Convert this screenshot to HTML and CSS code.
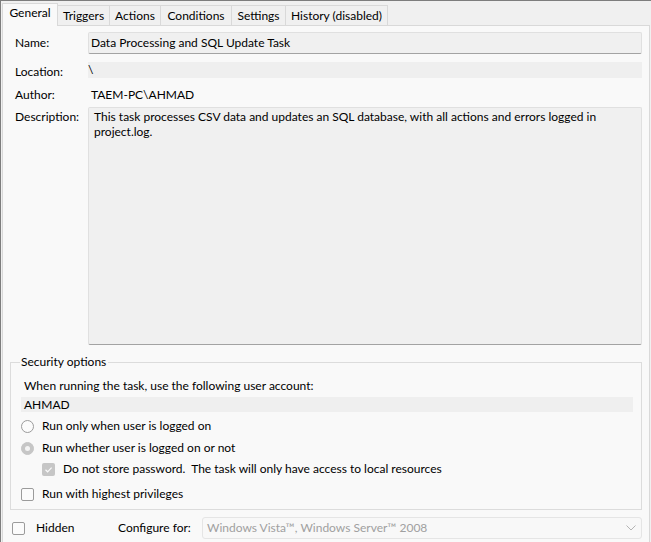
FILE: index.html
```html
<!DOCTYPE html>
<html>
<head>
<meta charset="utf-8">
<link rel="stylesheet" href="styles.css">
</head>
<body>
<div class="window">
  <div class="tabs">
    <div class="tab active w-general">General</div>
    <div class="tab w-triggers">Triggers</div>
    <div class="tab w-actions">Actions</div>
    <div class="tab w-conditions">Conditions</div>
    <div class="tab w-settings">Settings</div>
    <div class="tab w-history">History (disabled)</div>
  </div>
  <div class="panel">
    <div class="row row-name">
      <div class="label">Name:</div>
      <div class="field boxed name-field">Data Processing and SQL Update Task</div>
    </div>
    <div class="row row-location">
      <div class="label">Location:</div>
      <div class="field flat loc-field">\</div>
    </div>
    <div class="row row-author">
      <div class="label">Author:</div>
      <div class="field plain">TAEM-PC\AHMAD</div>
    </div>
    <div class="row row-desc">
      <div class="label desc-label">Description:</div>
      <div class="field boxed desc-field">This task processes CSV data and updates an SQL database, with all actions and errors logged in<br>project.log.</div>
    </div>
    <fieldset class="group">
      <legend>Security options</legend>
      <div class="account-label">When running the task, use the following user account:</div>
      <div class="account-field">AHMAD</div>
      <div class="opt opt-radio1"><span class="radio"></span><span>Run only when user is logged on</span></div>
      <div class="opt opt-radio2"><span class="radio checked-disabled"></span><span>Run whether user is logged on or not</span></div>
      <div class="opt opt-sub"><span class="check checked-disabled"><svg viewBox="0 0 13 13" width="13" height="13"><path d="M3.5 6.8 L5.6 8.8 L9.6 4.6" fill="none" stroke="#fafafa" stroke-width="1.2"/></svg></span><span>Do not store password.&nbsp; The task will only have access to local resources</span></div>
      <div class="opt opt-priv"><span class="check"></span><span>Run with highest privileges</span></div>
    </fieldset>
    <div class="bottom">
      <span class="check"></span>
      <span class="hidden-label">Hidden</span>
      <span class="config-label">Configure for:</span>
      <div class="combo">
        <span>Windows Vista™, Windows Server™ 2008</span>
        <svg class="chev" viewBox="0 0 10 6" width="10" height="6"><path d="M0.5 0.5 L5 5 L9.5 0.5" fill="none" stroke="#b4b4b4" stroke-width="1"/></svg>
      </div>
    </div>
  </div>
</div>
</body>
</html>
```
FILE: styles.css
```css
* { box-sizing: border-box; }
html, body { margin: 0; padding: 0; }
body {
  width: 651px;
  height: 542px;
  overflow: hidden;
  background: #f0f0f0;
  font-family: "Segoe UI", Lato, "Noto Sans", sans-serif;
  font-size: 12px;
  line-height: 16px;
  color: #000;
}
.window {
  height: 542px;
  overflow: hidden;
  border-top: 1px solid #7d7d7d;
  border-left: 1px solid #7d7d7d;
  padding-left: 1px;
}
.tabs {
  display: flex;
  align-items: flex-end;
  height: 24px;
}
.tab {
  height: 20px;
  border: 1px solid #d9d9d9;
  border-bottom: none;
  background: #f0f0f0;
  text-align: center;
  line-height: 19px;
  margin-left: -1px;
  white-space: nowrap;
}
.tab.active {
  height: 23px;
  margin-left: 0;
  margin-bottom: -1px;
  background: #f9f9f9;
  position: relative;
  z-index: 1;
  line-height: 18px;
}
.w-general { width: 56px; }
.w-triggers { width: 53px; }
.w-actions { width: 52px; }
.w-conditions { width: 72px; }
.w-settings { width: 55px; }
.w-history { width: 103px; }

.panel {
  width: 648px;
  height: 540px;
  border: 1px solid #d9d9d9;
  background: #f9f9f9;
  padding: 6px 7px 0 12px;
}
.row { display: flex; }
.label { width: 73px; flex: none; }
.field { flex: 1; }
.boxed {
  background: #f0f0f0;
  border: 1px solid #e0e0e0;
  border-bottom-color: #a3a3a3;
  border-radius: 2px;
}
.row-name { align-items: center; }
.name-field { height: 22px; padding: 2px 0 0 2px; }
.row-location { margin-top: 8px; }
.loc-field { height: 16px; background: #efefef; padding-left: 0; }
.row-location .label { padding-top: 2px; }
.row-author { margin-top: 7px; }
.row-author .field { padding-left: 3px; }
.row-desc { margin-top: 4px; }
.desc-label { padding-top: 2px; }
.desc-field { height: 238px; padding: 1px 5px 0; line-height: 15px; }

.group {
  margin: 9px 0 0 -5px;
  padding: 0 8px 0 10px;
  border: 1px solid #dcdcdc;
  width: 632px;
  height: 156px;
  min-width: 0;
}
.group legend {
  padding: 0 2px 0 1px;
  margin-left: -1px;
}
.account-label { margin-top: 8px; padding-left: 3px; }
.account-field {
  margin-top: 3px;
  height: 15px;
  background: #efefef;
  padding-left: 3px;
  line-height: 15px;
}
.opt { display: flex; align-items: center; height: 16px; }
.opt-radio1 { margin-top: 6px; }
.opt-radio2 { margin-top: 6px; }
.opt-sub { margin-top: 5px; padding-left: 21px; }
.opt-priv { margin-top: 9px; }
.radio {
  width: 13px;
  height: 13px;
  border-radius: 50%;
  border: 1px solid #9b9b9b;
  background: #fbfbfb;
  margin-right: 8px;
  flex: none;
  display: flex;
  align-items: center;
  justify-content: center;
}
.radio.checked-disabled {
  border-color: #c6c6c6;
  background: #c6c6c6;
}
.radio.checked-disabled::after {
  content: "";
  width: 5px;
  height: 5px;
  border-radius: 50%;
  background: #f4f4f4;
}
.check {
  width: 13px;
  height: 13px;
  border-radius: 2px;
  border: 1px solid #9b9b9b;
  background: #fbfbfb;
  margin-right: 8px;
  flex: none;
  display: flex;
}
.check.checked-disabled {
  border: none;
  background: #c6c6c6;
}
.check svg { display: block; }

.bottom {
  margin-top: 7px;
  display: flex;
  align-items: center;
  height: 22px;
  margin-left: -3px;
}
.bottom .check { margin-right: 11px; }
.hidden-label { width: 82px; }
.config-label { width: 84px; }
.combo {
  width: 440px;
  height: 22px;
  border: 1px solid #e5e5e5;
  border-radius: 3px;
  background: #f8f8f8;
  color: #a0a0a0;
  display: flex;
  align-items: center;
  justify-content: space-between;
  padding: 0 3px 0 4px;
}
.chev { margin-right: 2px; }
```
